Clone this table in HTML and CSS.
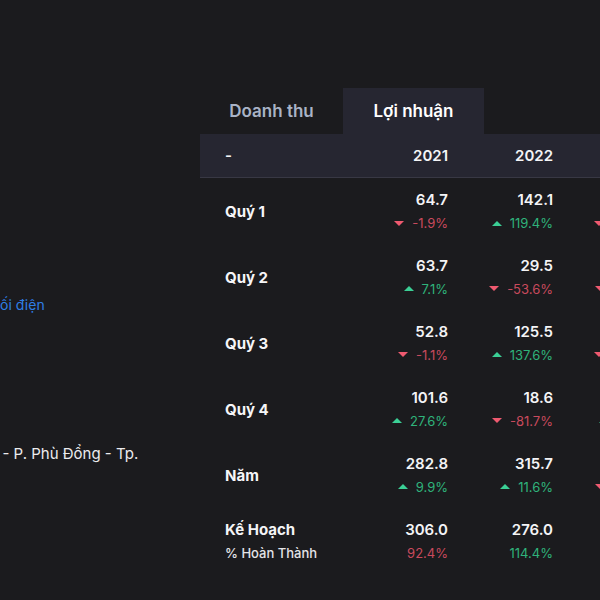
FILE: index.html
```html
<!DOCTYPE html>
<html lang="vi">
<head>
<meta charset="utf-8">
<link rel="stylesheet" href="styles.css">
</head>
<body>
<div class="page">
  <aside class="side">
    <div class="link">Thiết bị phân phối điện</div>
    <div class="addr">Số 8 Trần Hưng Đạo - P. Phù Đổng - Tp.</div>
  </aside>
  <main class="main">
    <div class="tabs">
      <div class="tab">Doanh thu</div>
      <div class="tab active">Lợi nhuận</div>
    </div>
    <table class="grid">
      <thead>
        <tr><th class="lbl">-</th><th>2021</th><th>2022</th><th>2023</th><th>2024</th></tr>
      </thead>
      <tbody>
        <tr>
          <td class="lbl">Quý 1</td>
          <td><div class="v">64.7</div><div class="c dn"><i></i>-1.9%</div></td>
          <td><div class="v">142.1</div><div class="c up"><i></i>119.4%</div></td>
          <td><div class="v">90.2</div><div class="c dn"><i></i>-36.5%</div></td>
          <td></td>
        </tr>
        <tr>
          <td class="lbl">Quý 2</td>
          <td><div class="v">63.7</div><div class="c up"><i></i>7.1%</div></td>
          <td><div class="v">29.5</div><div class="c dn"><i></i>-53.6%</div></td>
          <td><div class="v">21.0</div><div class="c dn"><i></i>-28.8%</div></td>
          <td></td>
        </tr>
        <tr>
          <td class="lbl">Quý 3</td>
          <td><div class="v">52.8</div><div class="c dn"><i></i>-1.1%</div></td>
          <td><div class="v">125.5</div><div class="c up"><i></i>137.6%</div></td>
          <td><div class="v">80.1</div><div class="c dn"><i></i>-36.2%</div></td>
          <td></td>
        </tr>
        <tr>
          <td class="lbl">Quý 4</td>
          <td><div class="v">101.6</div><div class="c up"><i></i>27.6%</div></td>
          <td><div class="v">18.6</div><div class="c dn"><i></i>-81.7%</div></td>
          <td><div class="v">40.4</div><div class="c up"><i></i>117.2%</div></td>
          <td></td>
        </tr>
        <tr>
          <td class="lbl">Năm</td>
          <td><div class="v">282.8</div><div class="c up"><i></i>9.9%</div></td>
          <td><div class="v">315.7</div><div class="c up"><i></i>11.6%</div></td>
          <td><div class="v">231.7</div><div class="c dn"><i></i>-26.6%</div></td>
          <td></td>
        </tr>
        <tr class="plan">
          <td class="lbl"><div class="v">Kế Hoạch</div><div class="sub">% Hoàn Thành</div></td>
          <td><div class="v">306.0</div><div class="c dn">92.4%</div></td>
          <td><div class="v">276.0</div><div class="c up">114.4%</div></td>
          <td><div class="v">250.0</div><div class="c dn">92.7%</div></td>
          <td></td>
        </tr>
      </tbody>
    </table>
  </main>
</div>
</body>
</html>
```
FILE: styles.css
```css
html, body {
  margin: 0;
  padding: 0;
  background: #1b1b1e;
  width: 600px;
  height: 600px;
  overflow: hidden;
  font-family: Inter, "Noto Sans", "DejaVu Sans", sans-serif;
  color: #f2f2f4;
}
.page {
  display: flex;
  width: 600px;
  height: 600px;
  overflow: hidden;
}
.side {
  flex: 0 0 200px;
  width: 200px;
  overflow: hidden;
  padding-top: 295px;
  box-sizing: border-box;
}
.link {
  white-space: nowrap;
  font-size: 14px;
  line-height: 20px;
  color: #2f7fe6;
  text-indent: -107px;
}
.addr {
  white-space: nowrap;
  font-size: 15px;
  line-height: 20px;
  color: #ececee;
  margin-top: 129px;
  text-indent: -145px;
}
.main {
  flex: 0 0 auto;
  padding-top: 88px;
}
.tabs {
  display: flex;
  height: 46px;
}
.tab {
  width: 143px;
  display: flex;
  align-items: center;
  justify-content: center;
  font-size: 17px;
  font-weight: 600;
  color: #a9b3c6;
}
.tab.active {
  width: 141px;
  background: #262631;
  color: #ffffff;
}
.grid {
  border-collapse: collapse;
  table-layout: fixed;
  width: 563px;
}
.grid th, .grid td {
  width: 105px;
  padding: 0;
  text-align: right;
  vertical-align: middle;
}
.grid .lbl {
  width: 118px;
  padding-left: 25px;
  text-align: left;
}
thead tr {
  background: #262631;
  height: 43px;
  border-bottom: 1px solid #383844;
}
thead th {
  font-size: 15px;
  font-weight: 600;
  color: #f4f4f6;
}
tbody tr {
  height: 66px;
}
tbody tr:first-child {
  height: 65px;
}
.grid tbody td {
  padding-top: 4px;
}
td.lbl {
  font-size: 15px;
  font-weight: 700;
  color: #f6f6f8;
}
.v {
  font-size: 15px;
  font-weight: 600;
  line-height: 20px;
  color: #f4f4f6;
}
.c {
  display: flex;
  justify-content: flex-end;
  align-items: center;
  gap: 8px;
  margin-top: 3px;
  font-size: 13px;
  line-height: 20px;
}
.c i {
  width: 0;
  height: 0;
  border-left: 5px solid transparent;
  border-right: 5px solid transparent;
}
.c.dn { color: #c94a5d; }
.c.up { color: #2fb37b; }
.c.dn i { border-top: 5px solid #ef5a70; }
.c.up i { border-bottom: 5px solid #3bcf95; }
.plan td.lbl .v {
  font-size: 15px;
  font-weight: 700;
}
.sub {
  margin-top: 3px;
  font-size: 13px;
  line-height: 20px;
  font-weight: 500;
  color: #e4e4e8;
}
```
